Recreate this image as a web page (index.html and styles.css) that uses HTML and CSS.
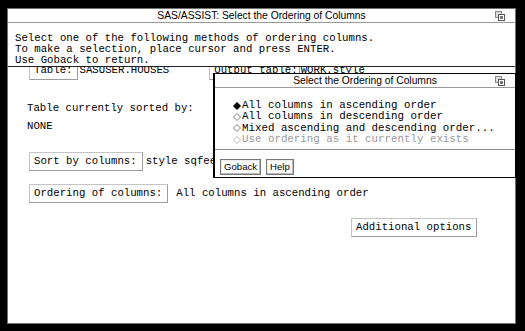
FILE: index.html
```html
<!DOCTYPE html>
<html lang="en">
<head>
    <meta charset="UTF-8">
    <title>SAS/ASSIST: Select the Ordering of Columns</title>
    <link rel="stylesheet" href="styles.css">
</head>
<body>
    <div class="screen">
        <div class="window">
            <div class="titlebar">
                <span class="title">SAS/ASSIST: Select the Ordering of Columns</span>
                <svg class="win-icon" width="10" height="10" viewBox="0 0 10 10">
                    <rect x="0.5" y="0.5" width="6" height="6" fill="#ddd" stroke="#888"/>
                    <rect x="3.5" y="3.5" width="6" height="6" fill="#fff" stroke="#555"/>
                    <rect x="5" y="5" width="3" height="3" fill="#777"/>
                </svg>
            </div>

            <div class="message">
                Select one of the following methods of ordering columns.<br>
                To make a selection, place cursor and press ENTER.<br>
                Use Goback to return.
            </div>

            <div class="content">
                <div class="row row-table">
                    <span class="field">Table:</span><span class="value value-tight">SASUSER.HOUSES</span>
                    <span class="field field-output">Output table:</span><span class="value value-tight">WORK.style</span>
                </div>
                <p class="label">Table currently sorted by:</p>
                <p class="label label-none">NONE</p>
                <div class="row row-sort">
                    <span class="field">Sort by columns:</span><span class="value">style sqfeet</span>
                </div>
                <div class="row row-order">
                    <span class="field">Ordering of columns:</span><span class="value value-wide">All columns in ascending order</span>
                </div>
                <div class="row row-options">
                    <span class="field">Additional options</span>
                </div>
            </div>

            <!-- popup over the main window -->
            <div class="dialog">
                <div class="titlebar">
                    <span class="title">Select the Ordering of Columns</span>
                    <svg class="win-icon" width="10" height="10" viewBox="0 0 10 10">
                        <rect x="0.5" y="0.5" width="6" height="6" fill="#ddd" stroke="#888"/>
                        <rect x="3.5" y="3.5" width="6" height="6" fill="#fff" stroke="#555"/>
                        <rect x="5" y="5" width="3" height="3" fill="#777"/>
                    </svg>
                </div>
                <div class="options">
                    <div class="option">
                        <svg class="diamond" width="8" height="8" viewBox="0 0 8 8"><polygon points="4,0.5 7.5,4 4,7.5 0.5,4" fill="#000" stroke="#000"/></svg>
                        <span>All columns in ascending order</span>
                    </div>
                    <div class="option">
                        <svg class="diamond" width="8" height="8" viewBox="0 0 8 8"><polygon points="4,0.5 7.5,4 4,7.5 0.5,4" fill="#fff" stroke="#808080"/></svg>
                        <span>All columns in descending order</span>
                    </div>
                    <div class="option">
                        <svg class="diamond" width="8" height="8" viewBox="0 0 8 8"><polygon points="4,0.5 7.5,4 4,7.5 0.5,4" fill="#fff" stroke="#808080"/></svg>
                        <span>Mixed ascending and descending order...</span>
                    </div>
                    <div class="option option-disabled">
                        <svg class="diamond" width="8" height="8" viewBox="0 0 8 8"><polygon points="4,0.5 7.5,4 4,7.5 0.5,4" fill="#fff" stroke="#b8b8b8"/></svg>
                        <span>Use ordering as it currently exists</span>
                    </div>
                </div>
                <div class="dialog-buttons">
                    <button class="btn">Goback</button>
                    <button class="btn">Help</button>
                </div>
            </div>
        </div>
    </div>
</body>
</html>
```

FILE: styles.css
```css
body {
    margin: 0;
    background-color: #000;
}
.screen {
    width: 525px;
    height: 331px;
    padding: 8px 0 0 7px;
    box-sizing: border-box;
}
.window {
    position: relative;
    width: 509px;
    height: 316px;
    box-sizing: border-box;
    border: 1px solid #707070;
    background-color: #fff;
    display: flex;
    flex-direction: column;
}
.titlebar {
    display: grid;
    grid-template-columns: 1fr auto 1fr;
    align-items: center;
    height: 13px;
    border-bottom: 1px solid #9a9a9a;
    font-family: "Liberation Sans", Arial, sans-serif;
    font-size: 10.3px;
    line-height: 13px;
    color: #000;
}
.titlebar .title {
    grid-column: 2;
    white-space: nowrap;
}
.win-icon {
    grid-column: 3;
    justify-self: end;
    margin-right: 10px;
    display: block;
}
/* --- message panel --- */
.message {
    position: relative;
    z-index: 1;
    background-color: #fff;
    padding: 10px 7px 0;
    height: 33px;
    border-bottom: 1px solid #222;
    font-family: "Liberation Mono", "Courier New", monospace;
    font-size: 10.7px;
    line-height: 11px;
    color: #000;
    white-space: nowrap;
}
/* --- main form --- */
.content {
    padding-left: 21px;
    font-family: "Liberation Mono", "Courier New", monospace;
    font-size: 10.7px;
    line-height: 12px;
    color: #000;
}
.row {
    display: flex;
    align-items: flex-start;
    white-space: nowrap;
}
.row-table {
    margin-top: -6px;
}
.row-sort {
    margin-top: 20px;
}
.row-order {
    margin-top: 13px;
}
.row-options {
    margin-top: 15px;
    padding-left: 322px;
}
.field {
    display: block;
    padding: 2px 5px 3px 4px;
    border: 1px solid #c4c4c4;
    border-right-color: #9c9c9c;
    border-bottom-color: #9c9c9c;
}
.field-output {
    margin-left: 40px;
    padding-right: 1px;
}
.value {
    padding-top: 3px;
    margin-left: 3px;
}
.value-tight {
    margin-left: 1px;
}
.value-wide {
    margin-left: 8px;
}
.label {
    margin: 22px 0 0 -2px;
    white-space: nowrap;
}
.label-none {
    margin-top: 6px;
}
/* --- dialog --- */
.dialog {
    position: absolute;
    z-index: 2;
    top: 64px;
    left: 205px;
    right: -1px;
    background-color: #fff;
    border: 1px solid #000;
    border-left-width: 2px;
}
.options {
    padding: 12px 0 4px 18px;
    font-family: "Liberation Mono", "Courier New", monospace;
    font-size: 10.8px;
    line-height: 11.3px;
    color: #000;
}
.option {
    display: flex;
    align-items: center;
    gap: 1px;
    white-space: nowrap;
}
.diamond {
    display: block;
}
.option-disabled {
    color: #9a9a9a;
}
.dialog-buttons {
    display: flex;
    gap: 5px;
    padding: 9px 0 2px 5px;
    border-top: 1px solid #8a8a8a;
}
.btn {
    height: 16px;
    padding: 0 3px;
    margin: 0;
    border: 1px solid #777;
    border-radius: 0;
    background-color: #fff;
    box-shadow: inset -1px -1px 0 #bbb, inset 1px 1px 0 #eee;
    font-family: "Liberation Sans", Arial, sans-serif;
    font-size: 9.6px;
    line-height: 12px;
    color: #000;
}
```
